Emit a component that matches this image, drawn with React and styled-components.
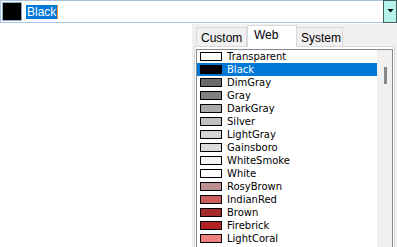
import React, { useState } from "react";
import styled, { createGlobalStyle } from "styled-components";

const colors = [
  { name: "Transparent", value: "#ffffff" },
  { name: "Black", value: "#000000" },
  { name: "DimGray", value: "#696969" },
  { name: "Gray", value: "#808080" },
  { name: "DarkGray", value: "#a9a9a9" },
  { name: "Silver", value: "#c0c0c0" },
  { name: "LightGray", value: "#d3d3d3" },
  { name: "Gainsboro", value: "#dcdcdc" },
  { name: "WhiteSmoke", value: "#f5f5f5" },
  { name: "White", value: "#ffffff" },
  { name: "RosyBrown", value: "#bc8f8f" },
  { name: "IndianRed", value: "#cd5c5c" },
  { name: "Brown", value: "#a52a2a" },
  { name: "Firebrick", value: "#b22222" },
  { name: "LightCoral", value: "#f08080" },
];

const tabs = ["Custom", "Web", "System"];

const GlobalStyle = createGlobalStyle`
  html, body {
    margin: 0;
    padding: 0;
    background: #fff;
    overflow: hidden;
  }
  body {
    font-family: "Liberation Sans", Arial, sans-serif;
  }
`;

const Page = styled.div`
  width: 397px;
  height: 247px;
  display: flex;
  flex-direction: column;
`;

const Combo = styled.div`
  height: 23px;
  box-sizing: border-box;
  border: 1px solid #a7c1e3;
  border-right: none;
  display: flex;
  align-items: center;
`;

const ComboSwatch = styled.div`
  width: 20px;
  height: 19px;
  box-sizing: border-box;
  margin-left: 1px;
  background: #000;
  border: 1px solid #8ea9cc;
`;

const Selected = styled.span`
  margin-left: 4px;
  height: 14px;
  line-height: 14px;
  padding: 0 1px;
  background: #0078d7;
  color: #fff;
  font-size: 12px;
  border-right: 1px solid #ff8a1c;
`;

const Spacer = styled.div`
  flex: 1;
`;

const DropButton = styled.div`
  width: 14px;
  height: 23px;
  margin-top: -1px;
  box-sizing: border-box;
  background: #b6f2ec;
  border: 1px solid #3f5e5e;
  display: flex;
  align-items: center;
  justify-content: center;
`;

const Popup = styled.div`
  margin: 1px 0 0 192px;
  flex: 1;
  background: #f0f0f0;
  padding: 1px 2px 0;
  display: flex;
  flex-direction: column;
  min-height: 0;
`;

const TabStrip = styled.div`
  display: flex;
  align-items: flex-end;
  padding-left: 2px;
  height: 22px;
  position: relative;
  z-index: 1;
  margin-bottom: -1px;
`;

const Tab = styled.div`
  box-sizing: border-box;
  width: ${(p) => p.$w}px;
  height: ${(p) => (p.$active ? 22 : 20)}px;
  border: 1px solid #d9d9d9;
  border-bottom: ${(p) => (p.$active ? "none" : "1px solid #d9d9d9")};
  border-left: ${(p) => (p.$first || p.$active ? "1px solid #d9d9d9" : "none")};
  background: ${(p) => (p.$active ? "#fff" : "#f0f0f0")};
  font-size: 12px;
  color: #000;
  padding: ${(p) => (p.$active ? "2px 0 0 6px" : "3px 0 0 4px")};
  line-height: 15px;
`;

const Panel = styled.div`
  flex: 1;
  min-height: 0;
  border: 1px solid #d9d9d9;
  border-bottom: none;
  background: #fff;
  padding: 2px 1px 0;
  display: flex;
`;

const ListBox = styled.div`
  flex: 1;
  border: 1px solid #828790;
  border-bottom: none;
  background: #fff;
  display: flex;
  min-height: 0;
  overflow: hidden;
`;

const Rows = styled.div`
  flex: 1;
  display: flex;
  flex-direction: column;
`;

const Row = styled.div`
  height: 13px;
  flex: none;
  display: flex;
  align-items: center;
  background: ${(p) => (p.$selected ? "#0078d7" : "transparent")};
  color: ${(p) => (p.$selected ? "#fff" : "#000")};
  font-family: "DejaVu Sans", sans-serif;
  font-size: 10px;
`;

const Swatch = styled.span`
  width: 22px;
  height: 9px;
  box-sizing: border-box;
  margin: 0 5px 0 3px;
  border: 1px solid #000;
  background: ${(p) => p.$color};
`;

const ScrollTrack = styled.div`
  width: 15px;
  background: #f0f0f0;
  display: flex;
  justify-content: center;
  padding-top: 17px;
`;

const Thumb = styled.div`
  width: 3px;
  height: 17px;
  margin-left: 1px;
  background: #888;
`;

export default function App() {
  const [active, setActive] = useState("Web");
  const [selected, setSelected] = useState("Black");

  return (
    <Page>
      <GlobalStyle />
      <Combo>
        <ComboSwatch />
        <Selected>{selected}</Selected>
        <Spacer />
        <DropButton>
          <svg width="7" height="4" viewBox="0 0 7 4">
            <polygon points="0.5,0 6.5,0 3.5,3.5" fill="#000" />
          </svg>
        </DropButton>
      </Combo>
      <Popup>
        <TabStrip>
          {tabs.map((t, i) => (
            <Tab
              key={t}
              $w={[51, 50, 46][i]}
              $first={i === 0}
              $active={t === active}
              onClick={() => setActive(t)}
            >
              {t}
            </Tab>
          ))}
        </TabStrip>
        <Panel>
          <ListBox>
            <Rows>
              {colors.map((c) => (
                <Row
                  key={c.name}
                  $selected={c.name === selected}
                  onClick={() => setSelected(c.name)}
                >
                  <Swatch $color={c.value} />
                  {c.name}
                </Row>
              ))}
            </Rows>
            <ScrollTrack>
              <Thumb />
            </ScrollTrack>
          </ListBox>
        </Panel>
      </Popup>
    </Page>
  );
}
